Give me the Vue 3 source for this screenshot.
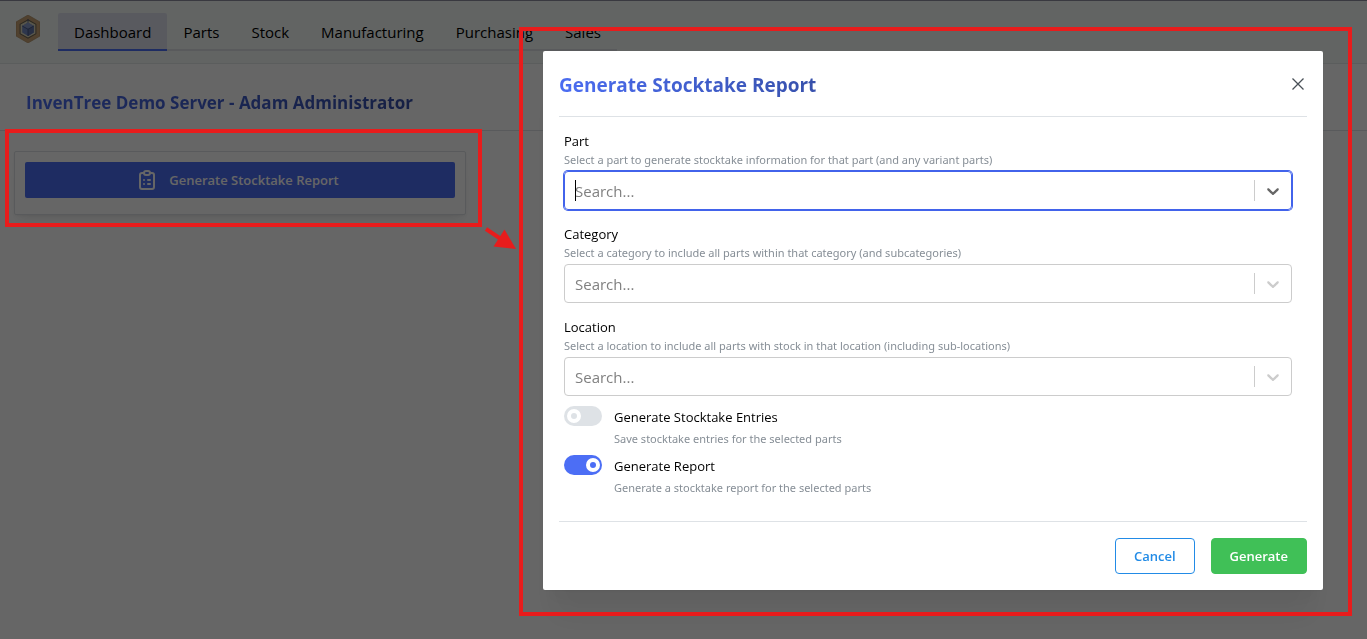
<script setup>
import { ref } from 'vue'

const tabs = ['Dashboard', 'Parts', 'Stock', 'Manufacturing', 'Purchasing', 'Sales']

const fields = [
  {
    id: 'part',
    label: 'Part',
    help: 'Select a part to generate stocktake information for that part (and any variant parts)',
    active: true
  },
  {
    id: 'category',
    label: 'Category',
    help: 'Select a category to include all parts within that category (and subcategories)',
    active: false
  },
  {
    id: 'location',
    label: 'Location',
    help: 'Select a location to include all parts with stock in that location (including sub-locations)',
    active: false
  }
]

const switches = ref([
  {
    id: 'entries',
    label: 'Generate Stocktake Entries',
    help: 'Save stocktake entries for the selected parts',
    on: false
  },
  {
    id: 'report',
    label: 'Generate Report',
    help: 'Generate a stocktake report for the selected parts',
    on: true
  }
])
</script>

<template>
  <div class="page">
    <header class="topbar">
      <a class="logo" href="#" aria-label="Home">
        <svg viewBox="0 0 24 28" width="24" height="28">
          <path d="M12 0 24 7v14l-12 7L0 21V7z" fill="#c9a377" />
          <path d="M12 0 24 7v14l-12 7L0 21V7z" fill="none" stroke="#a88558" stroke-width="0.6" />
          <path d="M12 4.2 20.4 9v10L12 23.8 3.6 19V9z" fill="#6b6250" />
          <path d="M12 5.4 19.4 9.6v8.800L12 22.6 4.6 18.4V9.6z" fill="#dcd8bc" />
          <path d="M12 7.6 17.8 11v6.6L12 21l-5.8-3.4V11z" fill="#7489c0" />
          <path d="M12 7.6 17.8 11 12 14.2 6.2 11z" fill="#8b9cc8" />
          <path d="M12 14.2 17.8 11v6.6L12 21z" fill="#6476a8" />
          <path d="M6.2 11 12 14.2 17.8 11M12 14.2V21M12 4.2v3.4" fill="none" stroke="#3d4c78" stroke-width="0.8" />
        </svg>
      </a>
      <nav class="tabs">
        <a v-for="(tab, i) in tabs" :key="tab" href="#" class="tab" :class="{ current: i === 0 }">{{ tab }}</a>
      </nav>
    </header>
    <div class="titlebar">
      <h1 class="gradient">InvenTree Demo Server - Adam Administrator</h1>
    </div>
    <main class="widgets">
      <section class="card">
        <button class="wide-button" type="button">
          <svg viewBox="0 0 24 24" width="24" height="24" fill="none" stroke="currentColor" stroke-width="2" stroke-linecap="round" stroke-linejoin="round">
            <path d="M9 5H7a2 2 0 0 0-2 2v12a2 2 0 0 0 2 2h10a2 2 0 0 0 2-2V7a2 2 0 0 0-2-2h-2" />
            <path d="M9 5a2 2 0 0 1 2-2h2a2 2 0 0 1 2 2a2 2 0 0 1-2 2h-2a2 2 0 0 1-2-2z" />
            <path d="M9 12h.01M13 12h2M9 16h.01M13 16h2" />
          </svg>
          <span>Generate Stocktake Report</span>
        </button>
      </section>
    </main>
  </div>

  <div class="overlay">
    <form class="modal" role="dialog" aria-labelledby="modal-title" @submit.prevent>
      <div class="modal-head">
        <h2 id="modal-title" class="gradient">Generate Stocktake Report</h2>
        <button class="close" type="button" aria-label="Close">
          <svg viewBox="0 0 12 12" width="12" height="12" fill="none" stroke="currentColor" stroke-width="1.3">
            <path d="M0.5 0.5l11 11M11.5 0.5l-11 11" />
          </svg>
        </button>
      </div>

      <div class="modal-body">
        <div v-for="field in fields" :key="field.id" class="field">
          <label :for="field.id">{{ field.label }}</label>
          <p class="help">{{ field.help }}</p>
          <div class="select" :class="{ active: field.active }">
            <input :id="field.id" type="text" placeholder="Search..." autocomplete="off" />
            <span v-if="field.active" class="caret"></span>
            <span class="separator"></span>
            <svg class="chevron" viewBox="0 0 20 20" width="20" height="20" fill="currentColor">
              <path d="M4.516 7.548c0.436-0.446 1.043-0.481 1.576 0l3.908 3.747 3.908-3.747c0.533-0.481 1.141-0.446 1.574 0 0.436 0.445 0.408 1.197 0 1.615-0.406 0.418-4.695 4.502-4.695 4.502-0.217 0.223-0.502 0.335-0.787 0.335s-0.57-0.112-0.789-0.335c0 0-4.287-4.084-4.695-4.502s-0.436-1.17 0-1.615z" />
            </svg>
          </div>
        </div>

        <div class="switches">
          <div v-for="item in switches" :key="item.id" class="switch-row">
            <input :id="item.id" v-model="item.on" class="switch" type="checkbox" role="switch" />
            <div>
              <label :for="item.id">{{ item.label }}</label>
              <p class="help">{{ item.help }}</p>
            </div>
          </div>
        </div>
      </div>

      <div class="modal-foot">
        <button class="btn cancel" type="button">Cancel</button>
        <button class="btn submit" type="submit">Generate</button>
      </div>
    </form>
  </div>

  <div class="mark mark-button"></div>
  <div class="mark mark-modal"></div>
  <svg class="arrow" viewBox="0 0 34 26" width="34" height="26">
    <path d="M2 3 17 13" stroke="#e81c1c" stroke-width="4" />
    <path d="M20.5 3.5 32 23 9.500 20.500z" fill="#e81c1c" />
  </svg>
</template>

<style>
body {
  background: #ffffff;
}
</style>

<style scoped>
.page,
.overlay {
  font-family: "Segoe UI", "Open Sans", "Noto Sans", sans-serif;
  color: #000000;
}

h1,
h2,
p {
  margin: 0;
}

button,
input {
  font-family: inherit;
}

.gradient {
  background: linear-gradient(45deg, #4c6ef5, #364fa7);
  background-clip: text;
  color: transparent;
  font-weight: 700;
}

.topbar {
  display: flex;
  align-items: flex-start;
  box-sizing: border-box;
  height: 64px;
  padding: 12px 16px 0;
  border-top: 1px solid #8f8fa0;
  border-bottom: 1px solid #e3e8e8;
  background: #f4faf7;
}

.logo {
  display: flex;
  padding-top: 2px;
  margin-right: 18px;
}

.tabs {
  display: flex;
  border-bottom: 2px solid #dee2e6;
}

.tab {
  padding: 2px 16px 0;
  margin-bottom: -2px;
  border-bottom: 2px solid transparent;
  border-radius: 2px 2px 0 0;
  color: #000000;
  font-size: 15px;
  line-height: 34px;
  text-decoration: none;
}

.tab.current {
  border-bottom-color: #4c6ef5;
  background: #dfe1ee;
}

.titlebar {
  display: flex;
  align-items: center;
  box-sizing: border-box;
  height: 67px;
  padding: 12px 26px 0;
  border-bottom: 1px solid #dee2e6;
}

.titlebar h1 {
  font-size: 17px;
  line-height: 26px;
}

.widgets {
  padding: 20px 14px;
}

.card {
  box-sizing: border-box;
  max-width: 452px;
  padding: 10px 10px 16px;
  border: 1px solid #dee2e6;
  border-radius: 2px;
  box-shadow: 0 1px 3px rgba(0, 0, 0, 0.05), 0 10px 15px -5px rgba(0, 0, 0, 0.05), 0 7px 7px -5px rgba(0, 0, 0, 0.04);
}

.wide-button {
  display: flex;
  align-items: center;
  justify-content: center;
  gap: 10px;
  width: 100%;
  height: 36px;
  padding: 0 6px 0 0;
  border: 0;
  border-radius: 2px;
  background: #4c6ef5;
  color: #ffffff;
  font-size: 13px;
  font-weight: 600;
}

.overlay {
  position: fixed;
  inset: 0;
  display: flex;
  align-items: flex-start;
  justify-content: flex-end;
  padding: 51px 44px 0;
  background: rgba(0, 0, 0, 0.6);
}

.modal {
  box-sizing: border-box;
  width: 780px;
  max-width: 100%;
  padding: 0 16px 16px;
  border-radius: 2px;
  background: #ffffff;
  box-shadow: 0 1px 3px rgba(0, 0, 0, 0.05), 0 36px 28px -7px rgba(0, 0, 0, 0.05), 0 17px 17px -7px rgba(0, 0, 0, 0.04);
}

.modal-head {
  display: flex;
  align-items: center;
  justify-content: space-between;
  height: 65px;
  border-bottom: 1px solid #dee2e6;
}

.modal-head h2 {
  padding-top: 2px;
  font-size: 19px;
  line-height: 28px;
}

.close {
  display: flex;
  align-items: center;
  justify-content: center;
  width: 18px;
  height: 28px;
  padding: 0;
  border: 0;
  background: none;
  color: #495057;
}

.modal-body {
  padding: 14px 15px 22px 5px;
}

.field {
  margin-bottom: 14px;
}

label {
  display: block;
  font-size: 13px;
  line-height: 20px;
}

.help {
  color: #868e96;
  font-family: "Segoe UI", "Noto Sans", "Open Sans", sans-serif;
  font-size: 11px;
  line-height: 18px;
}

.select {
  position: relative;
  display: flex;
  align-items: center;
  box-sizing: border-box;
  height: 39px;
  margin-top: 2px;
  border: 1px solid #cccccc;
  border-radius: 4px;
  color: #cccccc;
}

.select.active {
  border-color: #4263eb;
  box-shadow: 0 0 0 1px #4263eb;
  color: #666666;
}

.select input {
  flex: 1;
  min-width: 0;
  padding: 0 10px;
  border: 0;
  outline: 0;
  background: none;
  font-size: 15px;
  line-height: 24px;
}

.select input::placeholder {
  color: #808080;
  opacity: 1;
}

.caret {
  position: absolute;
  top: 8px;
  left: 10px;
  width: 1px;
  height: 21px;
  background: #000000;
}

.separator {
  width: 1px;
  height: 21px;
  background: #cccccc;
}

.chevron {
  margin: 0 8px;
}

.switches {
  display: grid;
  gap: 5px;
  margin-top: -4px;
}

.switch-row {
  display: flex;
  gap: 12px;
}

.switch-row label,
.switch-row .help {
  line-height: 22px;
}

.switch {
  appearance: none;
  display: flex;
  align-items: center;
  box-sizing: border-box;
  width: 38px;
  height: 20px;
  margin: 0;
  padding: 0 3px;
  border-radius: 10px;
  background: #dee2e6;
}

.switch::before {
  content: "";
  box-sizing: border-box;
  width: 14px;
  height: 14px;
  border: 4px solid #ffffff;
  border-radius: 50%;
  background: #dee2e6;
}

.switch:checked {
  justify-content: flex-end;
  padding-right: 2px;
  background: #4c6ef5;
}

.switch:checked::before {
  background: #4c6ef5;
}

.modal-foot {
  display: flex;
  justify-content: flex-end;
  gap: 16px;
  padding-top: 16px;
  border-top: 1px solid #dee2e6;
}

.btn {
  height: 36px;
  padding: 0 18px;
  border: 1px solid #40c057;
  border-radius: 4px;
  background: #40c057;
  color: #ffffff;
  font-size: 13px;
  font-weight: 600;
}

.btn.cancel {
  border-color: #228be6;
  background: #ffffff;
  color: #228be6;
}

.mark {
  position: absolute;
  box-sizing: border-box;
  border: 4px solid #e81c1c;
  pointer-events: none;
}

.mark-button {
  top: 129px;
  left: 5px;
  width: 477px;
  height: 98px;
}

.mark-modal {
  top: 27px;
  right: 15px;
  width: 833px;
  height: 589px;
}

.arrow {
  position: absolute;
  top: 226px;
  left: 484px;
  pointer-events: none;
}
</style>
